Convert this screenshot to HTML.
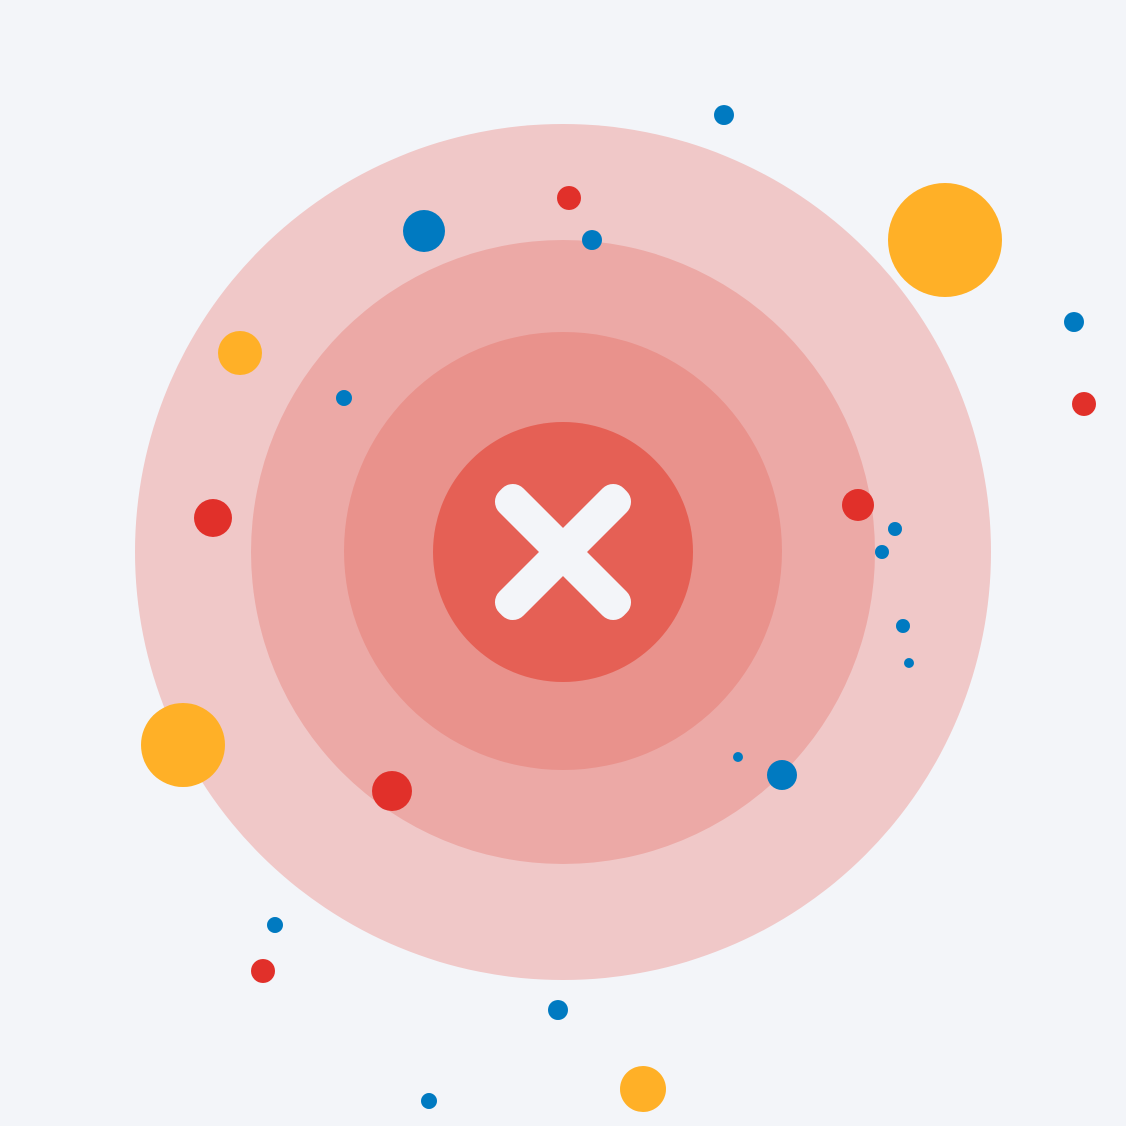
<!DOCTYPE html>
<html><head><style>html,body{margin:0;padding:0;background:#f3f5f9;}svg{display:block}</style></head>
<body>
<svg width="1126" height="1126" viewBox="0 0 1126 1126" xmlns="http://www.w3.org/2000/svg">
<rect width="1126" height="1126" fill="#f3f5f9"/>
<circle cx="563" cy="552" r="428" fill="#f0c8c8"/>
<circle cx="563" cy="552" r="312" fill="#eca9a6"/>
<circle cx="563" cy="551" r="219" fill="#e9928c"/>
<circle cx="563" cy="552" r="130" fill="#e56055"/>
<g transform="translate(563,552) rotate(45)" fill="#f3f5f9">
<rect x="-88" y="-17" width="176" height="34" rx="15"/>
<rect x="-17" y="-88" width="34" height="176" rx="15"/>
</g>
<g fill="#007ac1">
<circle cx="724" cy="115" r="10"/><circle cx="424" cy="231" r="21"/><circle cx="592" cy="240" r="10"/>
<circle cx="1074" cy="322" r="10"/><circle cx="344" cy="398" r="8"/><circle cx="895" cy="529" r="7"/>
<circle cx="882" cy="552" r="7"/><circle cx="903" cy="626" r="7"/><circle cx="909" cy="663" r="5"/>
<circle cx="738" cy="757" r="5"/><circle cx="782" cy="775" r="15"/><circle cx="275" cy="925" r="8"/>
<circle cx="558" cy="1010" r="10"/><circle cx="429" cy="1101" r="8"/>
</g>
<g fill="#e1302a">
<circle cx="569" cy="198" r="12"/><circle cx="1084" cy="404" r="12"/><circle cx="213" cy="518" r="19"/>
<circle cx="858" cy="505" r="16"/><circle cx="392" cy="791" r="20"/><circle cx="263" cy="971" r="12"/>
</g>
<g fill="#ffb027">
<circle cx="945" cy="240" r="57"/><circle cx="240" cy="353" r="22"/><circle cx="183" cy="745" r="42"/>
<circle cx="643" cy="1089" r="23"/>
</g>
</svg>
</body></html>
